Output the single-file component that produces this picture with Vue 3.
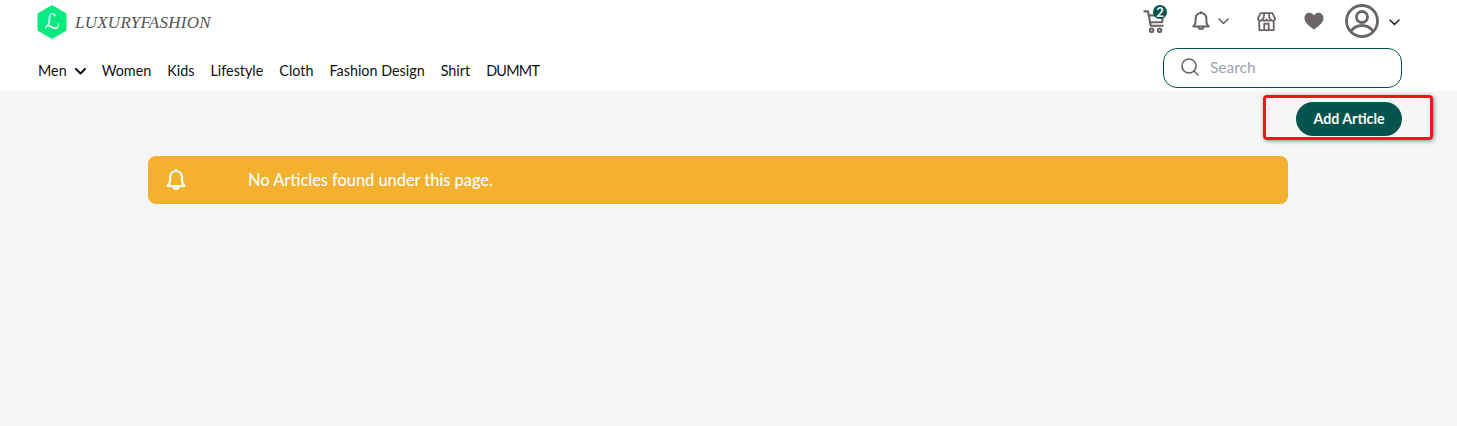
<template>
  <div class="page">
    <header class="header">
      <div class="top">
        <div class="logo">
          <svg class="hex" width="30" height="34" viewBox="0 0 30 34">
            <polygon points="15,0 29.5,8.5 29.5,25.5 15,34 0.5,25.5 0.5,8.5" fill="#06ea7f" />
            <text x="15" y="24" text-anchor="middle" class="hex-l">ℒ</text>
          </svg>
          <span class="brand">LUXURYFASHION</span>
        </div>
        <div class="actions">
          <div class="cart">
            <svg width="22" height="24" viewBox="0 0 26 30" fill="none" stroke="#6b6567" stroke-width="2.600" stroke-linecap="round" stroke-linejoin="round">
              <path d="M1 3h4.500l3.500 18h15" />
              <path d="M6.500 8h18l-1.500 8.500H8" />
              <circle cx="10" cy="26.500" r="2.200" />
              <circle cx="20" cy="26.500" r="2.200" />
            </svg>
            <span class="badge">2</span>
          </div>
          <div class="bell-group">
            <svg width="18" height="20" viewBox="0 0 20 22" fill="none" stroke="#6b6567" stroke-width="2.200" stroke-linecap="round" stroke-linejoin="round">
              <path d="M1.500 17c2-1.500 2.500-3.500 2.500-6V8a6 6 0 0 1 12 0v3c0 2.500.5 4.500 2.500 6z" />
              <path d="M7.200 17a2.800 2.800 0 0 0 5.600 0" />
              <path d="M10 2V1" />
            </svg>
            <svg width="11" height="7" viewBox="0 0 11 7" fill="none" stroke="#6b6567" stroke-width="1.600" stroke-linecap="round" stroke-linejoin="round">
              <path d="M1 1l4.500 4.500L10 1" />
            </svg>
          </div>
          <svg class="store" width="19" height="19" viewBox="0 0 21 21" fill="none" stroke="#6b6567" stroke-width="2" stroke-linejoin="round">
            <path d="M4 1.200h13l3 6a2.500 2.500 0 0 1-4.800 1 2.500 2.500 0 0 1-4.700 0 2.500 2.500 0 0 1-4.700 0A2.500 2.500 0 0 1 1 7.200z" />
            <path d="M2.500 10.500V20h16V10.500" />
            <path d="M8 20v-7h5v7" />
            <path d="M8 1.200l-1 7M13 1.200l1 7" />
          </svg>
          <svg class="heart" width="20" height="18" viewBox="0 0 21 19">
            <path d="M10.500 18.500C4 14 .5 10.500.5 6.300.5 3 3 .8 5.700.8c2 0 3.700 1 4.800 2.800C11.600 1.800 13.300.8 15.300.8c2.700 0 5.200 2.200 5.200 5.500 0 4.200-3.500 7.700-10 12.200z" fill="#6b6567" />
          </svg>
          <svg class="user" width="34" height="34" viewBox="0 0 34 34" fill="none" stroke="#6b6567" stroke-width="2.800">
            <circle cx="17" cy="17" r="15.500" />
            <circle cx="17" cy="13" r="5.500" />
            <path d="M6 27c3-4 7-5.500 11-5.500s8 1.500 11 5.500" />
          </svg>
          <svg class="user-caret" width="11" height="7" viewBox="0 0 11 7" fill="none" stroke="#222" stroke-width="1.500" stroke-linecap="round" stroke-linejoin="round">
            <path d="M1 1l4.500 4.500L10 1" />
          </svg>
        </div>
      </div>
      <div class="bottom">
        <nav class="nav">
          <a class="nav-item men">Men
            <svg width="11" height="7" viewBox="0 0 11 7" fill="none" stroke="#111" stroke-width="2" stroke-linecap="round" stroke-linejoin="round">
              <path d="M1 1l4.500 4.500L10 1" />
            </svg>
          </a>
          <a v-for="item in items" :key="item" class="nav-item">{{ item }}</a>
        </nav>
        <div class="search">
          <svg width="18" height="18" viewBox="0 0 18 18" fill="none" stroke="#6b6567" stroke-width="1.600" stroke-linecap="round">
            <circle cx="8" cy="8" r="7" />
            <path d="M13 13l4 4" />
          </svg>
          <span class="placeholder">Search</span>
        </div>
      </div>
    </header>
    <main class="main">
      <div class="toolbar">
        <div class="highlight"></div>
        <button class="add">Add Article</button>
      </div>
      <div class="alert">
        <svg width="20" height="22" viewBox="0 0 20 22" fill="none" stroke="#fff" stroke-width="2.200" stroke-linecap="round" stroke-linejoin="round">
          <path d="M1.500 17c2-1.500 2.500-3.500 2.500-6V8a6 6 0 0 1 12 0v3c0 2.500.5 4.500 2.500 6z" />
          <path d="M7.200 17a2.800 2.800 0 0 0 5.600 0" />
          <path d="M10 2V1" />
        </svg>
        <span class="alert-text">No Articles found under this page.</span>
      </div>
    </main>
  </div>
</template>

<script setup>
const items = ['Women', 'Kids', 'Lifestyle', 'Cloth', 'Fashion Design', 'Shirt', 'DUMMT']
</script>

<style>
html, body { margin: 0; background: #f6f6f6; }
</style>

<style scoped>
.page {
  width: 1457px;
  height: 426px;
  overflow: hidden;
  background: #f6f6f6;
  font-family: "Lato", "Open Sans", sans-serif;
}
.header {
  box-sizing: border-box;
  height: 91px;
  background: #fff;
  padding: 5px 55px 0 37px;
}
.top {
  display: flex;
  justify-content: space-between;
  height: 43px;
}
.logo {
  display: flex;
  align-items: flex-start;
  gap: 8px;
}
.hex { display: block; }
.hex-l {
  font-family: "DejaVu Sans", serif;
  font-size: 21px;
  fill: #fff;
}
.brand {
  font-family: "Liberation Serif", serif;
  font-style: italic;
  font-size: 17px;
  letter-spacing: 0.250px;
  color: #555;
  margin-top: 8px;
}
.actions {
  display: flex;
  align-items: flex-start;
  margin-right: 2px;
}
.cart {
  position: relative;
  width: 22px;
  margin-top: 4px;
  margin-right: 27px;
}
.cart svg { display: block; }
.badge {
  position: absolute;
  top: -4px;
  left: 10px;
  width: 14px;
  height: 14px;
  border-radius: 50%;
  background: #03544c;
  color: #fff;
  font-size: 13px;
  font-weight: 700;
  line-height: 14px;
  text-align: center;
}
.bell-group {
  display: flex;
  align-items: center;
  gap: 8px;
  margin-top: 6px;
  height: 20px;
  margin-right: 28px;
}
.store { margin-top: 7px; margin-right: 28px; }
.heart { margin-top: 7px; margin-right: 21px; }
.user { margin-top: -1px; margin-right: 10px; }
.user-caret { margin-top: 14px; }
.bottom {
  display: flex;
  justify-content: space-between;
  align-items: flex-start;
}
.nav {
  display: flex;
  gap: 16px;
  margin-top: 14px;
  margin-left: 1px;
  font-size: 14.350px;
  line-height: 18px;
  color: #111;
}
.nav-item { white-space: nowrap; }
.nav-item:last-child { letter-spacing: -0.700px; }
.men {
  display: flex;
  align-items: center;
  gap: 8px;
}
.search {
  box-sizing: border-box;
  width: 239px;
  height: 40px;
  border: 1px solid #03544c;
  border-radius: 14px;
  display: flex;
  align-items: center;
  gap: 11px;
  padding-left: 17px;
  padding-bottom: 2px;
  background: #fff;
}
.placeholder {
  font-size: 15.500px;
  color: #9aa3af;
}
.main {
  padding: 11px 55px 0 148px;
}
.toolbar {
  position: relative;
  display: flex;
  justify-content: flex-end;
}
.highlight {
  position: absolute;
  top: -7px;
  right: -31px;
  box-sizing: border-box;
  width: 170px;
  height: 45px;
  border: 3.500px solid #f5141a;
  border-radius: 4px;
  box-shadow: 1px 1px 4px rgba(0, 0, 0, 0.45);
}
.add {
  position: relative;
  width: 106px;
  height: 34px;
  border: 0;
  border-radius: 17px;
  background: #03544c;
  color: #fff;
  font-family: inherit;
  font-size: 14.200px;
  font-weight: 700;
  padding: 0 0 2px;
}
.alert {
  box-sizing: border-box;
  width: 1140px;
  height: 48px;
  margin-top: 20px;
  border-radius: 8px;
  background: #f4b02f;
  color: #fff;
  display: flex;
  align-items: center;
  padding-left: 18px;
}
.alert-text {
  margin-left: 62px;
  margin-bottom: 2px;
  font-size: 16.350px;
  font-weight: 500;
}
</style>
